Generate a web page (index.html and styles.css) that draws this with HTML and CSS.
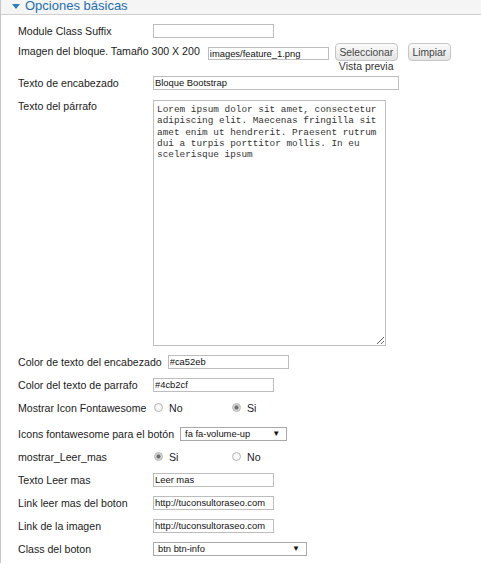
FILE: index.html
```html
<!DOCTYPE html>
<html lang="es">
<head>
<meta charset="utf-8">
<title>Opciones básicas</title>
<link rel="stylesheet" href="styles.css">
</head>
<body>
<div class="panel">
  <div class="panel-head">
    <svg class="caret" width="8" height="5" viewBox="0 0 8 5"><path d="M0 0H8L4 5Z" fill="#2b7cc2"/></svg>
    <span class="title">Opciones básicas</span>
  </div>
  <div class="form">
    <div class="row">
      <label class="lbl">Module Class Suffix</label>
      <input class="txt w121" type="text" value="">
    </div>
    <div class="row row-img">
      <label class="lbl lbl-img">Imagen del bloque. Tamaño 300 X 200</label>
      <div class="media">
        <div class="media-line">
          <input class="txt w121 img-input" type="text" value="images/feature_1.png">
          <button class="btn btn-sel" type="button">Seleccionar</button>
          <button class="btn btn-lim" type="button">Limpiar</button>
        </div>
        <div class="preview">Vista previa</div>
      </div>
    </div>
    <div class="row">
      <label class="lbl">Texto de encabezado</label>
      <input class="txt w246" type="text" value="Bloque Bootstrap">
    </div>
    <div class="row row-area">
      <label class="lbl lbl-area">Texto del párrafo</label>
      <textarea class="area">Lorem ipsum dolor sit amet, consectetur adipiscing elit. Maecenas fringilla sit amet enim ut hendrerit. Praesent rutrum dui a turpis porttitor mollis. In eu scelerisque ipsum</textarea>
    </div>
    <div class="row">
      <label class="lbl">Color de texto del encabezado</label>
      <input class="txt w121" type="text" value="#ca52eb">
    </div>
    <div class="row">
      <label class="lbl">Color del texto de parrafo</label>
      <input class="txt w121" type="text" value="#4cb2cf">
    </div>
    <div class="row">
      <label class="lbl">Mostrar Icon Fontawesome</label>
      <div class="radios">
        <span class="opt"><span class="radio"></span>No</span>
        <span class="opt"><span class="radio on"></span>Si</span>
      </div>
    </div>
    <div class="row row-sel">
      <label class="lbl">Icons fontawesome para el botón</label>
      <span class="select w107"><span class="sel-text">fa fa-volume-up</span><span class="sel-arrow">▼</span></span>
    </div>
    <div class="row">
      <label class="lbl">mostrar_Leer_mas</label>
      <div class="radios">
        <span class="opt"><span class="radio on"></span>Si</span>
        <span class="opt"><span class="radio"></span>No</span>
      </div>
    </div>
    <div class="row">
      <label class="lbl">Texto Leer mas</label>
      <input class="txt w121" type="text" value="Leer mas">
    </div>
    <div class="row">
      <label class="lbl">Link leer mas del boton</label>
      <input class="txt w121" type="text" value="http://tuconsultoraseo.com">
    </div>
    <div class="row">
      <label class="lbl">Link de la imagen</label>
      <input class="txt w121" type="text" value="http://tuconsultoraseo.com">
    </div>
    <div class="row">
      <label class="lbl">Class del boton</label>
      <span class="select w154"><span class="sel-text">btn btn-info</span><span class="sel-arrow">▼</span></span>
    </div>
  </div>
</div>
</body>
</html>
```

FILE: styles.css
```css
* { box-sizing: border-box; }
html, body { margin: 0; padding: 0; background: #fff; }
body {
  font-family: "Liberation Sans", Arial, sans-serif;
  color: #222;
  width: 481px;
  height: 569px;
  overflow: hidden;
}
.panel {
  border-left: 1px solid #c8c8c8;
  width: 481px;
}
.panel-head {
  height: 15px;
  background: #f5f5f5;
  border-bottom: 1px solid #cfcfcf;
  display: flex;
  align-items: flex-start;
  line-height: 11px;
  padding-left: 11px;
}
.caret { margin-top: 4px; margin-right: 5px; flex: none; }
.title {
  font-size: 13px;
  color: #1f6fae;
}
.form {
  padding: 4px 0 3px 17px;
}
.row {
  display: flex;
  align-items: center;
  height: 23px;
}
.lbl {
  font-size: 10.6px;
  min-width: 129px;
  margin-right: 6px;
  white-space: nowrap;
}
.txt {
  height: 14px;
  border: 1px solid #bdbdbd;
  padding: 0 1px;
  font-family: "Liberation Sans", Arial, sans-serif;
  font-size: 9.4px;
  color: #111;
  background: #fff;
  outline: none;
}
.w121 { width: 121px; }
.w246 { width: 246px; }
.row-img {
  height: auto;
  align-items: flex-start;
}
.lbl-img { line-height: 19px; margin-right: 8px; }
.media { display: flex; flex-direction: column; }
.media-line {
  display: flex;
  align-items: flex-start;
  height: 19px;
}
.img-input { height: 13px; margin-top: 5px; }
.btn {
  height: 18px;
  margin-top: 1px;
  border: 1px solid #c6c6c6;
  border-radius: 4px;
  background: linear-gradient(#fbfbfb, #e4e4e4);
  font-family: "Liberation Sans", Arial, sans-serif;
  font-size: 10.3px;
  color: #444;
  padding: 0;
}
.btn-sel { width: 63px; margin-left: 6px; }
.btn-lim { width: 43px; margin-left: 10px; }
.preview {
  font-size: 10.5px;
  line-height: 10px;
  margin-left: 131px;
  color: #333;
}
.row-area {
  height: auto;
  align-items: flex-start;
  padding: 6px 0 4px;
}
.lbl-area { line-height: 12px; }
.area {
  width: 233px;
  height: 246px;
  border: 1px solid #bdbdbd;
  padding: 3px 3px;
  font-family: "Liberation Mono", "DejaVu Sans Mono", monospace;
  font-size: 9.4px;
  line-height: 11.3px;
  color: #333;
  margin: 0;
  outline: none;
}
.radios { display: flex; align-items: center; }
.opt {
  width: 78px;
  display: flex;
  align-items: center;
  padding-left: 1px;
  font-size: 10.6px;
}
.radio {
  width: 9px;
  height: 9px;
  border-radius: 50%;
  border: 1px solid #b4b4b4;
  background: radial-gradient(circle, #ffffff 0, #ececec 100%);
  margin-right: 6px;
  flex: none;
}
.radio.on {
  background: radial-gradient(circle, #6e6e6e 0, #6e6e6e 1.6px, #cfcfcf 2.4px, #f0f0f0 100%);
}
.row-sel { margin-top: 3px; }
.select {
  height: 14px;
  border: 1px solid #a9a9a9;
  background: #fff;
  display: flex;
  align-items: center;
  justify-content: space-between;
  padding: 0 6px 0 4px;
  font-size: 9.4px;
  color: #111;
}
.w107 { width: 107px; }
.w154 { width: 154px; }
.sel-arrow { font-size: 8px; color: #111; }
```
